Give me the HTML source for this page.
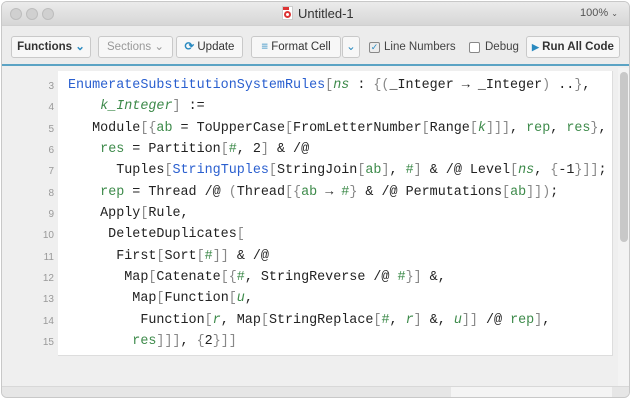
<!DOCTYPE html>
<html><head><style>
*{margin:0;padding:0;box-sizing:border-box}
body{width:631px;height:400px;background:#fff;font-family:"Liberation Sans",sans-serif;position:relative;overflow:hidden}
.win{position:absolute;left:1px;top:1px;width:629px;height:397px;border-radius:6px;overflow:hidden;background:#efefef;border:1px solid #c8c8c8}
.title{position:absolute;left:0;top:0;width:100%;height:23px;background:linear-gradient(#ebebeb,#d6d6d6);font-size:13px;color:#333}
.dot{position:absolute;top:6px;width:12px;height:12px;border-radius:50%;background:#d0d0d0;border:1px solid #bdbdbd}
.tb{position:absolute;left:0;top:23px;width:100%;height:39px;background:#ececec;border-top:1px solid #d0d0d0}
.btn{position:absolute;top:10px;height:22px;border:1px solid #c9c9c9;border-radius:3px;background:#f7f7f7;font-size:11.5px;color:#333;line-height:20px;text-align:center}
.blue{position:absolute;left:0;top:62px;width:100%;height:2px;background:#5ba3c4}
.cell{position:absolute;left:56px;top:69px;width:555px;height:285px;background:#fff;border-right:1px solid #ddd;border-bottom:1px solid #ddd}
.code{position:absolute;left:0;top:74px;font-family:"Liberation Mono",monospace;font-size:13.4px;color:#222;white-space:pre}
.ln{position:absolute;left:0;width:52px;text-align:right;font-family:"Liberation Sans",sans-serif;font-size:10px;color:#999}
.tx{position:absolute;left:66px}
.g{color:#3d8a4a}.b{color:#2a5fcf}.k{color:#888}.i{font-style:italic}
</style></head><body>
<div class="win">
 <div class="title">
  <div class="dot" style="left:8px"></div><div class="dot" style="left:24px"></div><div class="dot" style="left:40px"></div>
  <div style="position:absolute;left:280px;top:4px;width:11px;height:14px;background:#fff;border:1px solid #ccc"><div style="position:absolute;left:1px;top:4px;width:7px;height:7px;border-radius:50%;border:2px solid #d33"></div><div style="position:absolute;left:0;top:0;width:6px;height:3px;background:#d33"></div></div>
  <div style="position:absolute;left:296px;top:4px;font-size:13px">Untitled-1</div>
  <div style="position:absolute;left:578px;top:5px;font-size:11px;color:#555">100% <span style="font-size:8px">&#8964;</span></div>
 </div>
 <div class="tb">
  <div class="btn" style="left:9px;width:80px;font-weight:bold">Functions <span style="color:#2a8ac0">&#8964;</span></div>
  <div class="btn" style="left:96px;width:75px;color:#999">Sections &#8964;</div>
  <div class="btn" style="left:174px;width:67px"><span style="color:#2a8ac0;font-weight:bold">&#10227;</span> Update</div>
  <div class="btn" style="left:249px;width:90px"><span style="color:#2a8ac0">&#8801;</span> Format Cell</div>
  <div class="btn" style="left:340px;width:18px;color:#2a8ac0">&#8964;</div>
  <div style="position:absolute;left:367px;top:16px;width:11px;height:11px;border:1px solid #888;border-radius:2px;font-size:9px;line-height:9px;text-align:center;color:#2a8ac0">&#10003;</div>
  <div style="position:absolute;left:382px;top:15px;font-size:11.5px;color:#444">Line Numbers</div>
  <div style="position:absolute;left:467px;top:16px;width:11px;height:11px;border:1px solid #888;border-radius:2px;background:#fff"></div>
  <div style="position:absolute;left:483px;top:15px;font-size:11.5px;color:#444">Debug</div>
  <div class="btn" style="left:524px;width:94px;font-weight:bold"><span style="color:#2a8ac0;font-size:9px">&#9654;</span> Run All Code</div>
 </div>
 <div class="blue"></div>
 <div class="cell"></div>
 <div style="position:absolute;left:616px;top:66px;width:12px;height:318px;background:#f3f3f3"></div>
 <div style="position:absolute;left:618px;top:70px;width:8px;height:170px;background:#c8c8c8;border-radius:4px"></div>
 <div style="position:absolute;left:0;top:384px;width:100%;height:13px;background:#e6e6e6;border-top:1px solid #d8d8d8"></div>
 <div style="position:absolute;left:449px;top:385px;width:161px;height:12px;background:#f4f4f4"></div>
 <div class="code">
<div class="ln" style="top:5px">3</div><div class="tx" style="top:2px"><span class="b">EnumerateSubstitutionSystemRules</span><span class="k">[</span><span class="g i">ns</span> : <span class="k">{(</span>_Integer → _Integer<span class="k">)</span> ..<span class="k">}</span>,</div>
<div class="ln" style="top:26px">4</div><div class="tx" style="top:23px">    <span class="g i">k_Integer</span><span class="k">]</span> :=</div>
<div class="ln" style="top:48px">5</div><div class="tx" style="top:45px">   Module<span class="k">[{</span><span class="g">ab</span> = ToUpperCase<span class="k">[</span>FromLetterNumber<span class="k">[</span>Range<span class="k">[</span><span class="g i">k</span><span class="k">]]]</span>, <span class="g">rep</span>, <span class="g">res</span><span class="k">}</span>,</div>
<div class="ln" style="top:69px">6</div><div class="tx" style="top:66px">    <span class="g">res</span> = Partition<span class="k">[</span><span class="g">#</span>, 2<span class="k">]</span> &amp; /@</div>
<div class="ln" style="top:90px">7</div><div class="tx" style="top:87px">      Tuples<span class="k">[</span><span class="b">StringTuples</span><span class="k">[</span>StringJoin<span class="k">[</span><span class="g">ab</span><span class="k">]</span>, <span class="g">#</span><span class="k">]</span> &amp; /@ Level<span class="k">[</span><span class="g i">ns</span>, <span class="k">{</span>-1<span class="k">}]]</span>;</div>
<div class="ln" style="top:112px">8</div><div class="tx" style="top:109px">    <span class="g">rep</span> = Thread /@ <span class="k">(</span>Thread<span class="k">[{</span><span class="g">ab</span> → <span class="g">#</span><span class="k">}</span> &amp; /@ Permutations<span class="k">[</span><span class="g">ab</span><span class="k">]])</span>;</div>
<div class="ln" style="top:133px">9</div><div class="tx" style="top:130px">    Apply<span class="k">[</span>Rule,</div>
<div class="ln" style="top:154px">10</div><div class="tx" style="top:151px">     DeleteDuplicates<span class="k">[</span></div>
<div class="ln" style="top:176px">11</div><div class="tx" style="top:173px">      First<span class="k">[</span>Sort<span class="k">[</span><span class="g">#</span><span class="k">]]</span> &amp; /@</div>
<div class="ln" style="top:197px">12</div><div class="tx" style="top:194px">       Map<span class="k">[</span>Catenate<span class="k">[{</span><span class="g">#</span>, StringReverse /@ <span class="g">#</span><span class="k">}]</span> &amp;,</div>
<div class="ln" style="top:218px">13</div><div class="tx" style="top:215px">        Map<span class="k">[</span>Function<span class="k">[</span><span class="g i">u</span>,</div>
<div class="ln" style="top:240px">14</div><div class="tx" style="top:237px">         Function<span class="k">[</span><span class="g i">r</span>, Map<span class="k">[</span>StringReplace<span class="k">[</span><span class="g">#</span>, <span class="g i">r</span><span class="k">]</span> &amp;, <span class="g i">u</span><span class="k">]]</span> /@ <span class="g">rep</span><span class="k">]</span>,</div>
<div class="ln" style="top:261px">15</div><div class="tx" style="top:258px">        <span class="g">res</span><span class="k">]]]</span>, <span class="k">{</span>2<span class="k">}]]</span></div>
 </div>
</div>
</body></html>
